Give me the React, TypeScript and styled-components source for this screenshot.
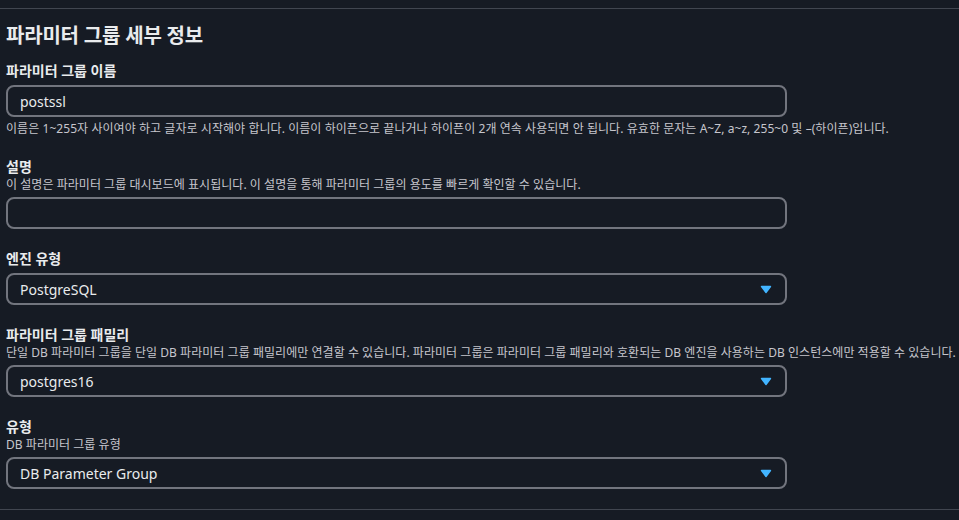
import React from "react";
import styled, { createGlobalStyle } from "styled-components";

const GlobalStyle = createGlobalStyle`
  html, body {
    margin: 0;
    padding: 0;
    background: #161b24;
  }
  body {
    font-family: "Noto Sans", "Noto Sans CJK KR", sans-serif;
    color: #e9ebed;
  }
`;

interface Field {
  label: string;
  description?: string;
  hint?: string;
  value: string;
  select?: boolean;
}

const fields: Field[] = [
  {
    label: "파라미터 그룹 이름",
    value: "postssl",
    hint:
      "이름은 1~255자 사이여야 하고 글자로 시작해야 합니다. 이름이 하이픈으로 끝나거나 하이픈이 2개 연속 사용되면 안 됩니다. 유효한 문자는 A~Z, a~z, 255~0 및 –(하이픈)입니다.",
  },
  {
    label: "설명",
    description:
      "이 설명은 파라미터 그룹 대시보드에 표시됩니다. 이 설명을 통해 파라미터 그룹의 용도를 빠르게 확인할 수 있습니다.",
    value: "",
  },
  { label: "엔진 유형", value: "PostgreSQL", select: true },
  {
    label: "파라미터 그룹 패밀리",
    description:
      "단일 DB 파라미터 그룹을 단일 DB 파라미터 그룹 패밀리에만 연결할 수 있습니다. 파라미터 그룹은 파라미터 그룹 패밀리와 호환되는 DB 엔진을 사용하는 DB 인스턴스에만 적용할 수 있습니다.",
    value: "postgres16",
    select: true,
  },
  {
    label: "유형",
    description: "DB 파라미터 그룹 유형",
    value: "DB Parameter Group",
    select: true,
  },
];

const CaretDown = () => (
  <svg width="16" height="16" viewBox="0 0 16 16" aria-hidden="true">
    <path
      d="M3.5 5.5h9L8 11.5z"
      fill="#42b4ff"
      stroke="#42b4ff"
      strokeWidth="1.4"
      strokeLinejoin="round"
    />
  </svg>
);

const App: React.FC = () => {
  return (
    <>
      <GlobalStyle />
      <Page>
        <Section>
          <Heading>파라미터 그룹 세부 정보</Heading>
          <Fields>
            {fields.map((f) => (
              <FieldBlock key={f.label}>
                <Label>{f.label}</Label>
                {f.description && <Description>{f.description}</Description>}
                <Control>
                  <ControlText>{f.value}</ControlText>
                  {f.select && <CaretDown />}
                </Control>
                {f.hint && <Hint>{f.hint}</Hint>}
              </FieldBlock>
            ))}
          </Fields>
        </Section>
      </Page>
    </>
  );
};

export default App;

const Page = styled.div`
  padding-top: 8px;
  width: 959px;
  height: 520px;
  box-sizing: border-box;
  overflow: hidden;
`;

const Section = styled.section`
  border-top: 1px solid #414650;
  border-bottom: 1px solid #414650;
  padding: 13px 0 20px 6px;
`;

const Heading = styled.h2`
  margin: 0;
  font-size: 20px;
  line-height: 28px;
  font-weight: 700;
  color: #e9ebed;
  letter-spacing: -0.2px;
`;

const Fields = styled.div`
  display: flex;
  flex-direction: column;
  gap: 20px;
  margin-top: 11px;
`;

const FieldBlock = styled.div`
  display: flex;
  flex-direction: column;
`;

const Label = styled.div`
  font-size: 14px;
  line-height: 20px;
  font-weight: 700;
  color: #e9ebed;
`;

const Description = styled.div`
  font-size: 12px;
  line-height: 16px;
  color: #c6c6cd;
  white-space: nowrap;
  letter-spacing: 0.04px;
`;

const Control = styled.div`
  margin-top: 4px;
  width: 781px;
  height: 32px;
  box-sizing: border-box;
  border: 2px solid #72757e;
  border-radius: 8px;
  display: flex;
  align-items: center;
  justify-content: space-between;
  padding: 0 11px 0 12px;
`;

const ControlText = styled.span`
  font-size: 14px;
  color: #e9ebed;
`;

const Hint = styled.div`
  margin-top: 4px;
  font-size: 12px;
  line-height: 16px;
  color: #c6c6cd;
  white-space: nowrap;
  letter-spacing: 0.06px;
`;
